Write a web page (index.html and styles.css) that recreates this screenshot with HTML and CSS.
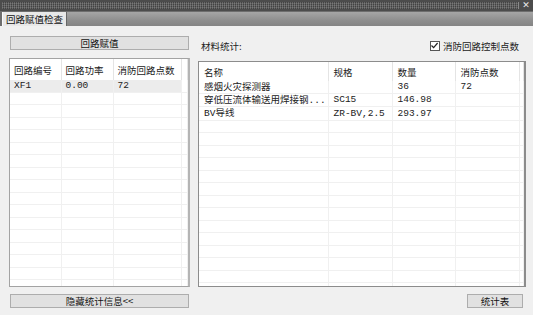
FILE: index.html
```html
<!DOCTYPE html>
<html lang="zh-CN">
<head>
  <meta charset="UTF-8">
  <title>回路赋值检查</title>
  <link rel="stylesheet" href="styles.css">
</head>
<body>

  <div class="titlebar">
    <div class="grip"></div>
    <div class="close">✕</div>
  </div>

  <div class="tabbar">
    <div class="tab">回路赋值检查</div>
    <div class="tab-fill"></div>
  </div>

  <div class="main">
    <div class="left">
      <button class="btn wide">回路赋值</button>
      <div class="grid-box">
        <table class="grid" id="loop-table">
          <colgroup><col style="width:51px"><col style="width:52px"><col style="width:68px"><col></colgroup>
          <thead>
            <tr><th>回路编号</th><th>回路功率</th><th>消防回路点数</th><th></th></tr>
          </thead>
          <tbody>
            <tr class="sel"><td class="num">XF1</td><td class="num">0.00</td><td class="num">72</td><td></td></tr>
          </tbody>
        </table>
      </div>
    </div>

    <div class="right">
      <div class="right-head">
        <span class="label">材料统计:</span>
        <label class="check"><span class="box"><svg width="9" height="9" viewBox="0 0 9 9"><path d="M1.5 4.5 L3.6 6.6 L7.6 2" fill="none" stroke="#222" stroke-width="1.2"/></svg></span>消防回路控制点数</label>
      </div>
      <div class="grid-box">
        <table class="grid" id="mat-table">
          <colgroup><col style="width:129px"><col style="width:64px"><col style="width:63px"><col style="width:64px"><col></colgroup>
          <thead>
            <tr><th>名称</th><th>规格</th><th>数量</th><th>消防点数</th><th></th></tr>
          </thead>
          <tbody>
            <tr><td>感烟火灾探测器</td><td></td><td class="num">36</td><td class="num">72</td><td></td></tr>
            <tr><td>穿低压流体输送用焊接钢<span class="num">...</span></td><td class="num">SC15</td><td class="num">146.98</td><td></td><td></td></tr>
            <tr><td><span class="num">BV</span>导线</td><td class="num">ZR-BV,2.5</td><td class="num">293.97</td><td></td><td></td></tr>
          </tbody>
        </table>
      </div>
    </div>
  </div>

  <div class="footer">
    <button class="btn wide">隐藏统计信息&lt;&lt;</button>
    <button class="btn small">统计表</button>
  </div>

  <script>
    // pad both grids with empty rows
    function fillRows(id, cols, total) {
      const body = document.querySelector('#' + id + ' tbody');
      while (body.rows.length < total) {
        const tr = document.createElement('tr');
        for (let i = 0; i < cols; i++) tr.appendChild(document.createElement('td'));
        body.appendChild(tr);
      }
    }
    fillRows('loop-table', 4, 17);
    fillRows('mat-table', 5, 17);
  </script>

</body>
</html>
```

FILE: styles.css
```css
body {
  margin: 0;
  width: 533px;
  height: 315px;
  overflow: hidden;
  background-color: #f0f0f0;
  font-family: "Noto Sans CJK SC", "Liberation Sans", sans-serif;
  font-size: 9.5px;
  color: #222;
  display: flex;
  flex-direction: column;
}

.titlebar {
  height: 11px;
  display: flex;
  background-color: #4c4c4c;
}

.grip {
  flex: 1;
  margin: 2px 0 2px 2px;
  background-color: #5a5a5a;
  background-image:
    linear-gradient(90deg, rgba(255, 255, 255, 0.18) 50%, transparent 50%),
    linear-gradient(rgba(0, 0, 0, 0.25) 50%, transparent 50%);
  background-size: 2px 2px;
  border-right: 1px solid #8a8a8a;
}

.close {
  width: 14px;
  color: #e8e8e8;
  font-family: "DejaVu Sans", sans-serif;
  font-size: 9px;
  font-weight: bold;
  line-height: 11px;
  text-align: center;
}

.tabbar {
  height: 15px;
  display: flex;
  background-color: #6e6e6e;
}

.tab {
  margin: 1px 0 0 2px;
  padding: 0 3px 0 3px;
  background-color: #e8e8e8;
  border-left: 1px solid #fafafa;
  line-height: 14px;
  color: #111;
}

.tab-fill {
  flex: 1;
  margin-top: 1px;
  background: linear-gradient(#a6a6a6, #8e8e8e 60%, #848484);
  border-left: 1px solid #666;
}

.main {
  flex: 1;
  display: flex;
  gap: 8px;
  padding: 10px 7px 0 9px;
  min-height: 0;
}

.left {
  width: 181px;
  display: flex;
  flex-direction: column;
}

.right {
  flex: 1;
  display: flex;
  flex-direction: column;
}

.btn {
  height: 14px;
  padding: 0;
  background-color: #e1e1e1;
  border: 1px solid #adadad;
  font-family: inherit;
  font-size: 9.5px;
  color: #111;
  line-height: 12px;
}

.btn.wide {
  width: 179px;
  margin-left: 1px;
}

.btn.small {
  width: 56px;
}

.left .btn {
  margin-bottom: 8px;
}

.right-head {
  height: 24px;
  display: flex;
  justify-content: space-between;
  align-items: flex-start;
  padding: 3px 7px 0 3px;
  line-height: 14px;
}

.check {
  display: flex;
  align-items: center;
  gap: 3px;
}

.box {
  width: 8px;
  height: 8px;
  border: 1px solid #555;
  background-color: #fff;
  display: flex;
}

.box svg {
  margin: -1px 0 0 -1px;
}

.grid-box {
  flex: 1;
  background-color: #fff;
  border: 1px solid #a3a3a3;
  border-right: 2px solid #b4b4b4;
  overflow: hidden;
}

.right .grid-box {
  border-color: #8c8c8c;
  border-right: 2px solid #8c8c8c;
  margin-top: -2px;
}

.grid {
  width: 100%;
  table-layout: fixed;
  border-collapse: collapse;
}

.grid th {
  height: 21px;
  padding: 0 0 0 4px;
  font-weight: normal;
  text-align: left;
  border-right: 1px solid #e4e4e4;
  white-space: nowrap;
  color: #1a1a1a;
}

#mat-table th {
  height: 19px;
  padding-left: 5px;
}

.grid td {
  height: 11.5px;
  padding: 0 0 0 4px;
  line-height: 11.5px;
  border-right: 1px solid #f0f0f0;
  border-bottom: 1px solid #f0f0f0;
  white-space: nowrap;
}

#mat-table td {
  padding-left: 5px;
}

.grid tr.sel td {
  background-color: #ececec;
}

.grid tr.sel td:last-child {
  background-color: #fff;
}

.num {
  font-family: "Liberation Mono", monospace;
  font-size: 9.5px;
}

.footer {
  height: 14px;
  display: flex;
  justify-content: space-between;
  padding: 7px 10px 7px 9px;
}
```
